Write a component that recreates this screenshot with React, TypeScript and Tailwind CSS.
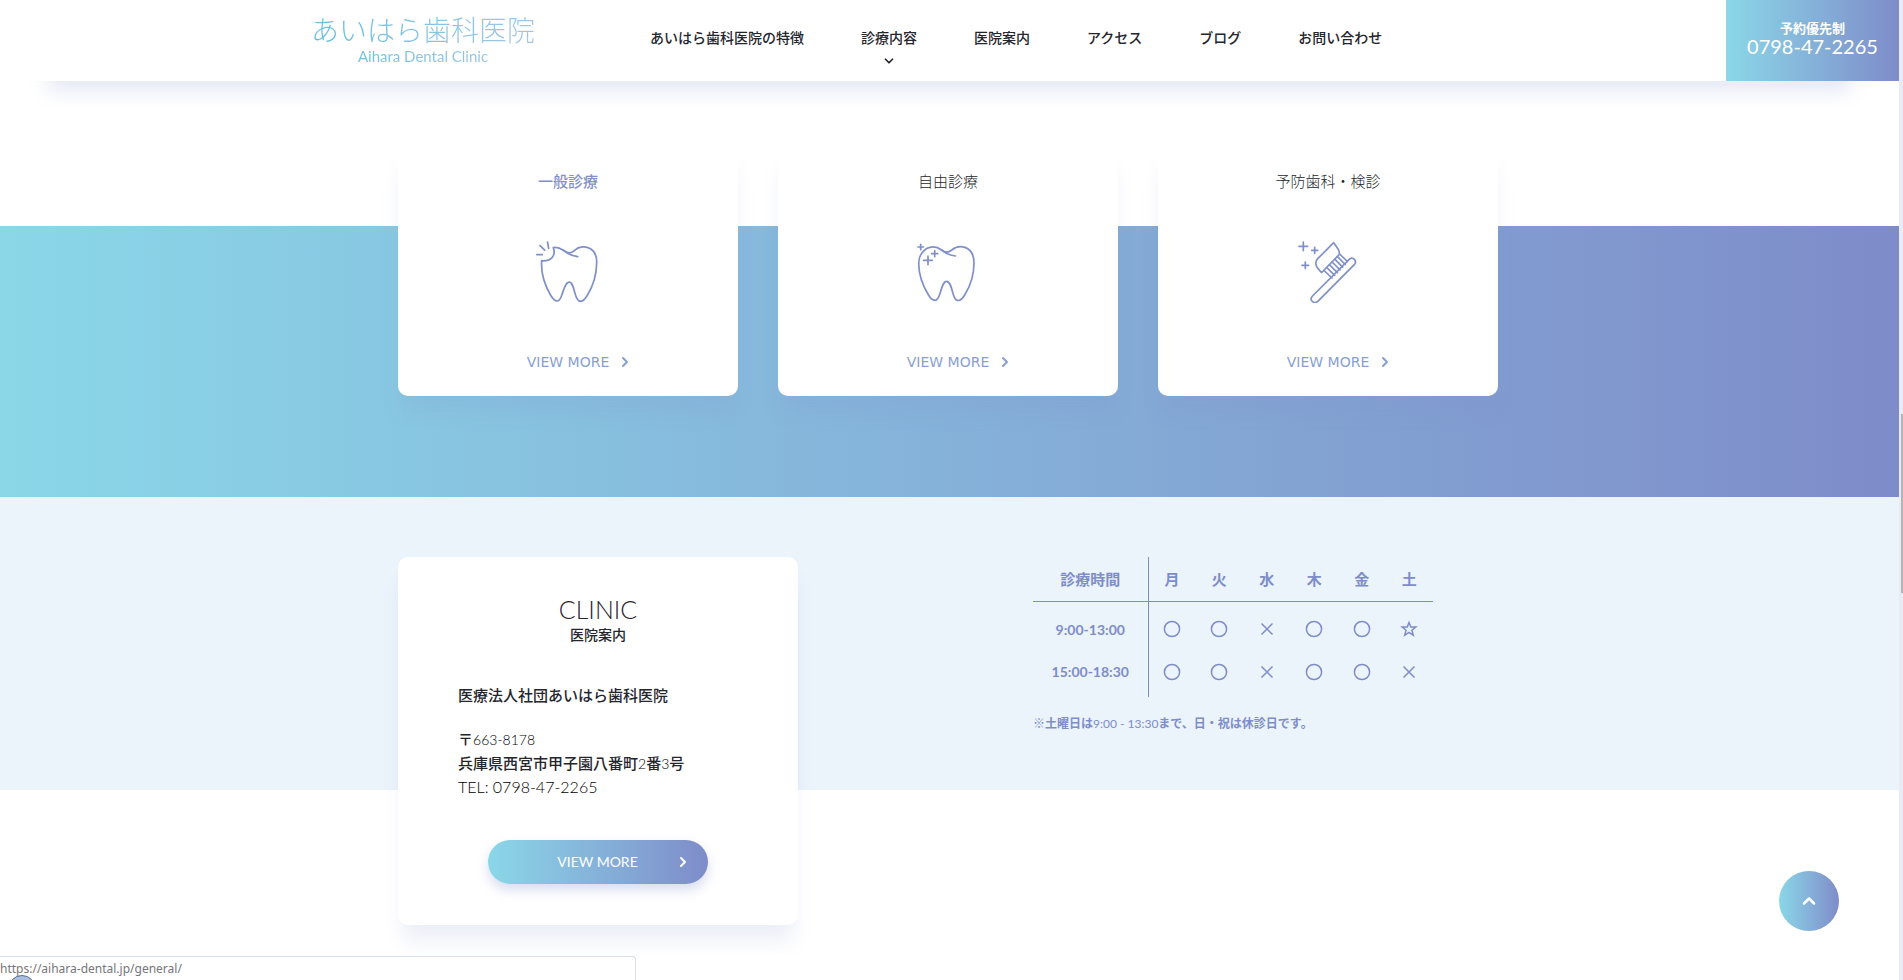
import type { ReactNode } from "react";

import { ChevronDown, ChevronRight, ChevronUp } from "lucide-react";

import clsx from "clsx";

const navItems = [
  { label: "あいはら歯科医院の特徴", href: "#feature" },
  { label: "診療内容", href: "#treatment", hasMenu: true },
  { label: "医院案内", href: "#clinic" },
  { label: "アクセス", href: "#access" },
  { label: "ブログ", href: "#blog" },
  { label: "お問い合わせ", href: "#contact" },
];

const days = ["月", "火", "水", "木", "金", "土"];

const hours = [
  { time: "9:00-13:00", marks: ["o", "o", "x", "o", "o", "s"] },
  { time: "15:00-18:30", marks: ["o", "o", "x", "o", "o", "x"] },
];

function Icon({ children }: { children: ReactNode }) {
  return (
    <svg
      viewBox="0 0 64 64"
      className="mt-[46px] size-16 text-[#7f90ca]"
      fill="none"
      stroke="currentColor"
      strokeWidth="1.7"
      strokeLinecap="round"
      strokeLinejoin="round"
      aria-hidden="true"
    >
      {children}
    </svg>
  );
}

function BrokenTooth() {
  return (
    <Icon>
      <path d="M17.3 8.6C21 7.8 24 9 27.3 11.2C31 14.4 35 14.6 38.5 11.3C43 7.4 49.5 6.8 54.5 9.8C59.5 12.8 60.9 17.5 60.7 24C60.5 35 57 47 51.5 56C48.5 61.5 46.5 62.3 44.3 62.3C42 62.3 40.6 59.5 39.5 56C37.8 50 36.5 43.2 33.3 43.2C29.5 43.2 28 50 26 55.5C24.5 60 23.3 62 21.3 62C18.5 62 16.5 59.5 14.5 56C9 46.5 4.8 33 5.7 21.7C14 22.5 20.5 17.5 17.3 8.6Z" />
      <path d="M27.3 11.2C31.5 15 35.5 16.8 41.7 17.7M0.8 15.7H6.3M4 6.7L8.7 11.2M11.5 3L12.7 9.3" />
    </Icon>
  );
}

function CleanTooth() {
  return (
    <Icon>
      <path d="M8.3 11.5C4.3 14.5 2.7 19 2.7 25C2.9 36 7 47 12.5 56C14.5 59.5 16.5 61.3 19 61.3C21.5 61.3 22.7 58.5 23.8 55C25.7 49 27 42.3 30.7 42.3C34 42.3 35.5 49 37.2 55C38.2 59 39.5 61.5 42.2 61.5C45 61.5 47 59 49 55.5C54.5 46.5 58 35 58 24C58 16 55 10.5 49 8.4C44 6.8 39.5 7.8 35.8 11C32.5 13.8 29 13.8 25.5 11C21 7.5 16 6.8 10.5 9.6L8.3 11.5" />
      <path d="M25 10.7C29.5 14.5 33 16.3 39.5 17" />
      <path d="M4.7 5.3V10.7M2 8H7.4M18.7 11.7V17.7M15.7 14.7H21.7M12 17V25.6M7.7 21.3H16.3" />
    </Icon>
  );
}

function Toothbrush() {
  return (
    <Icon>
      <path d="M37.7 3.7L21.7 19.7C18.2 23.5 19.6 28 25.7 33.5L43.3 15.5C44.5 11 41 9.5 37.7 3.7Z" />
      <path d="M28 31.5L36 39M30.7 28.5L38.7 36.3M33.4 25.7L41.4 33.6M36.1 23L44.1 31M38.8 20.2L46.6 28.2M41.5 17.6L49.2 25.5M43.5 15L51.5 22.5" />
      <path d="M53.2 20.3L16.5 57C12.8 61 18 65.5 21.8 62.3L58.3 25.7C61.6 21.8 57 17 53.2 20.3Z" />
      <path d="M7.3 3V11.6M3 7.3H11.6M18.7 8.3V14.3M15.7 11.3H21.7M9.3 23V29.6M6 26.3H12.6" />
    </Icon>
  );
}

const treatments = [
  { title: "一般診療", href: "#general", icon: <BrokenTooth />, active: true },
  { title: "自由診療", href: "#free", icon: <CleanTooth /> },
  { title: "予防歯科・検診", href: "#prevention", icon: <Toothbrush /> },
];

function Mark({ type }: { type: string }) {
  const labels: Record<string, string> = { o: "診療", x: "休診", s: "9:00 - 13:30" };

  return (
    <svg
      viewBox="0 0 18 18"
      className="mx-auto size-[18px]"
      fill="none"
      stroke="currentColor"
      strokeWidth="1.5"
      role="img"
      aria-label={labels[type]}
    >
      {type === "o" && <circle cx="9" cy="9" r="7.6" />}
      {type === "x" && <path d="M3.5 3.5L14.5 14.5M14.5 3.5L3.5 14.5" />}
      {type === "s" && (
        <path d="M9 2.5L10.8 7H15.8L11.9 10.2L13.3 15.3L9 12.3L4.7 15.3L6.1 10.2L2.2 7H7.2Z" />
      )}
    </svg>
  );
}

function Header() {
  return (
    <header className="fixed top-0 right-1 left-0 z-20 flex h-[81px] bg-white">
      <a
        href="#top"
        className="ml-[310px] flex w-[226px] flex-col items-center bg-linear-to-r from-[#62bfe0] to-[#a3c6e6] bg-clip-text text-transparent"
      >
        <span className="mt-3 text-[28px] leading-9 font-extralight whitespace-nowrap">
          あいはら歯科医院
        </span>
        <span className="text-[15px] leading-4">Aihara Dental Clinic</span>
      </a>

      <nav className="ml-[114px]">
        <ul className="flex gap-[57px] pt-[26px] text-sm leading-6 font-medium whitespace-nowrap">
          {navItems.map((item) => (
            <li key={item.label}>
              <a href={item.href} className="flex flex-col items-center">
                {item.label}
                {item.hasMenu && <ChevronDown className="mt-1 size-3.5" strokeWidth={3} />}
              </a>
            </li>
          ))}
        </ul>
      </nav>

      <a
        href="tel:0798472265"
        className="ml-auto flex w-[173px] flex-col items-center bg-linear-to-r from-[#8ad7e8] to-[#7e8cc9] pt-5 text-white"
      >
        <span className="text-[13px] leading-4 font-bold">予約優先制</span>
        <span className="text-xl leading-5">0798-47-2265</span>
      </a>

      {/* shadow under the bar, shorter than the bar on both sides */}
      <div className="pointer-events-none absolute inset-x-0 top-full h-10 overflow-hidden">
        <div className="mx-12 -mt-10 h-10 shadow-[0_10px_20px_rgba(127,140,201,0.2)]" />
      </div>
    </header>
  );
}

function Treatments() {
  return (
    <section className="flow-root bg-linear-to-r from-[#8ad7e8] to-[#7e8cc9] pb-[101px]">
      <div className="mx-auto -mt-20 w-full max-w-[1103px] pr-[3px]">
        <ul className="grid grid-cols-3 gap-10">
          {treatments.map((item) => (
            <li key={item.title}>
              <a
                href={item.href}
                className={clsx(
                  "flex flex-col items-center rounded-[10px] bg-white pt-[23px] pb-6 shadow-[0_20px_20px_-4px_rgba(127,140,201,0.15)]",
                  item.active ? "font-medium text-[#7f90ca]" : "font-light"
                )}
              >
                <h3 className="text-[15px] leading-6">{item.title}</h3>
                {item.icon}
                <span className="mt-[49px] ml-6 flex items-center gap-2 font-['DejaVu_Sans'] text-sm leading-5 font-normal text-[#879fd2]">
                  VIEW MORE
                  <ChevronRight className="size-4" strokeWidth={3} />
                </span>
              </a>
            </li>
          ))}
        </ul>
      </div>
    </section>
  );
}

function HoursTable() {
  return (
    <div className="w-[400px] text-[#7e8dca]">
      <table className="w-full table-fixed border-collapse text-center">
        <thead>
          <tr className="h-11 border-b border-[#7e8dca] text-[15px] leading-6">
            <th scope="col" className="w-[115px] border-r border-[#7e8dca] p-0 font-bold">
              診療時間
            </th>
            {days.map((day) => (
              <th key={day} scope="col" className="p-0 font-bold">
                {day}
              </th>
            ))}
          </tr>
        </thead>
        <tbody>
          {hours.map((row, i) => (
            <tr key={row.time} className={i === 0 ? "h-[50px]" : "h-[46px]"}>
              <th
                scope="row"
                className={clsx(
                  "border-r border-[#7e8dca] p-0 text-sm font-bold",
                  i === 0 ? "pt-2" : "pb-1"
                )}
              >
                {row.time}
              </th>
              {row.marks.map((mark, col) => (
                <td key={days[col]} className={i === 0 ? "p-0 pt-1.5" : "p-0 pb-1"}>
                  <Mark type={mark} />
                </td>
              ))}
            </tr>
          ))}
        </tbody>
      </table>
      <p className="mt-[17px] text-xs leading-5 font-bold">
        ※土曜日は<span className="font-normal">9:00 - 13:30</span>まで、日・祝は休診日です。
      </p>
    </div>
  );
}

function Clinic() {
  return (
    <section className="bg-[#ebf3fb] pt-[60px]">
      <div className="mx-auto flex w-full max-w-[1103px] items-start justify-between pr-[68px]">
        <div className="-mb-[135px] w-[400px] rounded-[10px] bg-white px-[60px] pt-[38px] pb-[41px] shadow-[0_20px_20px_-5px_rgba(127,140,201,0.15)]">
          <h2 className="flex flex-col items-center">
            <span className="text-[25px] leading-7 font-light">CLINIC</span>
            <span className="text-sm leading-6 font-medium">医院案内</span>
          </h2>
          <div className="mt-9 text-[15px] leading-6 font-medium">
            <p>医療法人社団あいはら歯科医院</p>
            <p className="mt-5">
              〒<span className="text-sm font-light text-black">663-8178</span>
            </p>
            <p>
              兵庫県西宮市甲子園八番町
              <span className="text-sm font-light text-black">2</span>番
              <span className="text-sm font-light text-black">3</span>号
            </p>
            <p className="text-base leading-6 font-light text-black">TEL: 0798-47-2265</p>
          </div>
          <a
            href="#clinic"
            className="mx-auto mt-[41px] flex h-11 w-[220px] items-center rounded-full bg-linear-to-r from-[#8ad7e8] to-[#7e8cc9] pr-[17px] pl-8 text-sm text-white shadow-[0_6px_12px_rgba(127,140,201,0.3)]"
          >
            <span className="grow text-center">VIEW MORE</span>
            <ChevronRight className="size-4" strokeWidth={3} />
          </a>
        </div>
        <HoursTable />
      </div>
    </section>
  );
}

export default function App() {
  return (
    <div
      id="top"
      className="min-h-screen overflow-hidden bg-white pr-1 font-[Lato,'Noto_Sans_CJK_JP',sans-serif] text-[#24252d]"
    >
      <Header />

      <main className="pt-[226px] pb-[190px]">
        <Treatments />
        <Clinic />
      </main>

      <a
        href="#top"
        aria-label="ページの先頭へ"
        className="fixed right-16 bottom-[49px] flex size-[60px] items-center justify-center rounded-full bg-linear-to-r from-[#8ad7e8] to-[#7e8cc9] text-white"
      >
        <ChevronUp className="size-5" strokeWidth={3} />
      </a>

      {/* link address bar */}
      <div className="fixed bottom-0 left-0 h-6 w-full max-w-[636px] overflow-hidden rounded-tr border-t border-r border-[#dcdfee] bg-white font-['Noto_Sans'] text-xs leading-[23px] text-[#75767a]">
        https://aihara-dental.jp/general/
        <span className="absolute top-[18px] left-2 size-7 rounded-full border border-[#5d6a85] bg-[#a9bfe3]" />
      </div>

      {/* scroll bar */}
      <div className="fixed inset-y-0 right-0 z-30 w-1 bg-[#e9ecf5]">
        <div className="mt-[414px] ml-auto h-[179px] w-0.5 bg-[#b3b3b3]" />
      </div>
    </div>
  );
}
